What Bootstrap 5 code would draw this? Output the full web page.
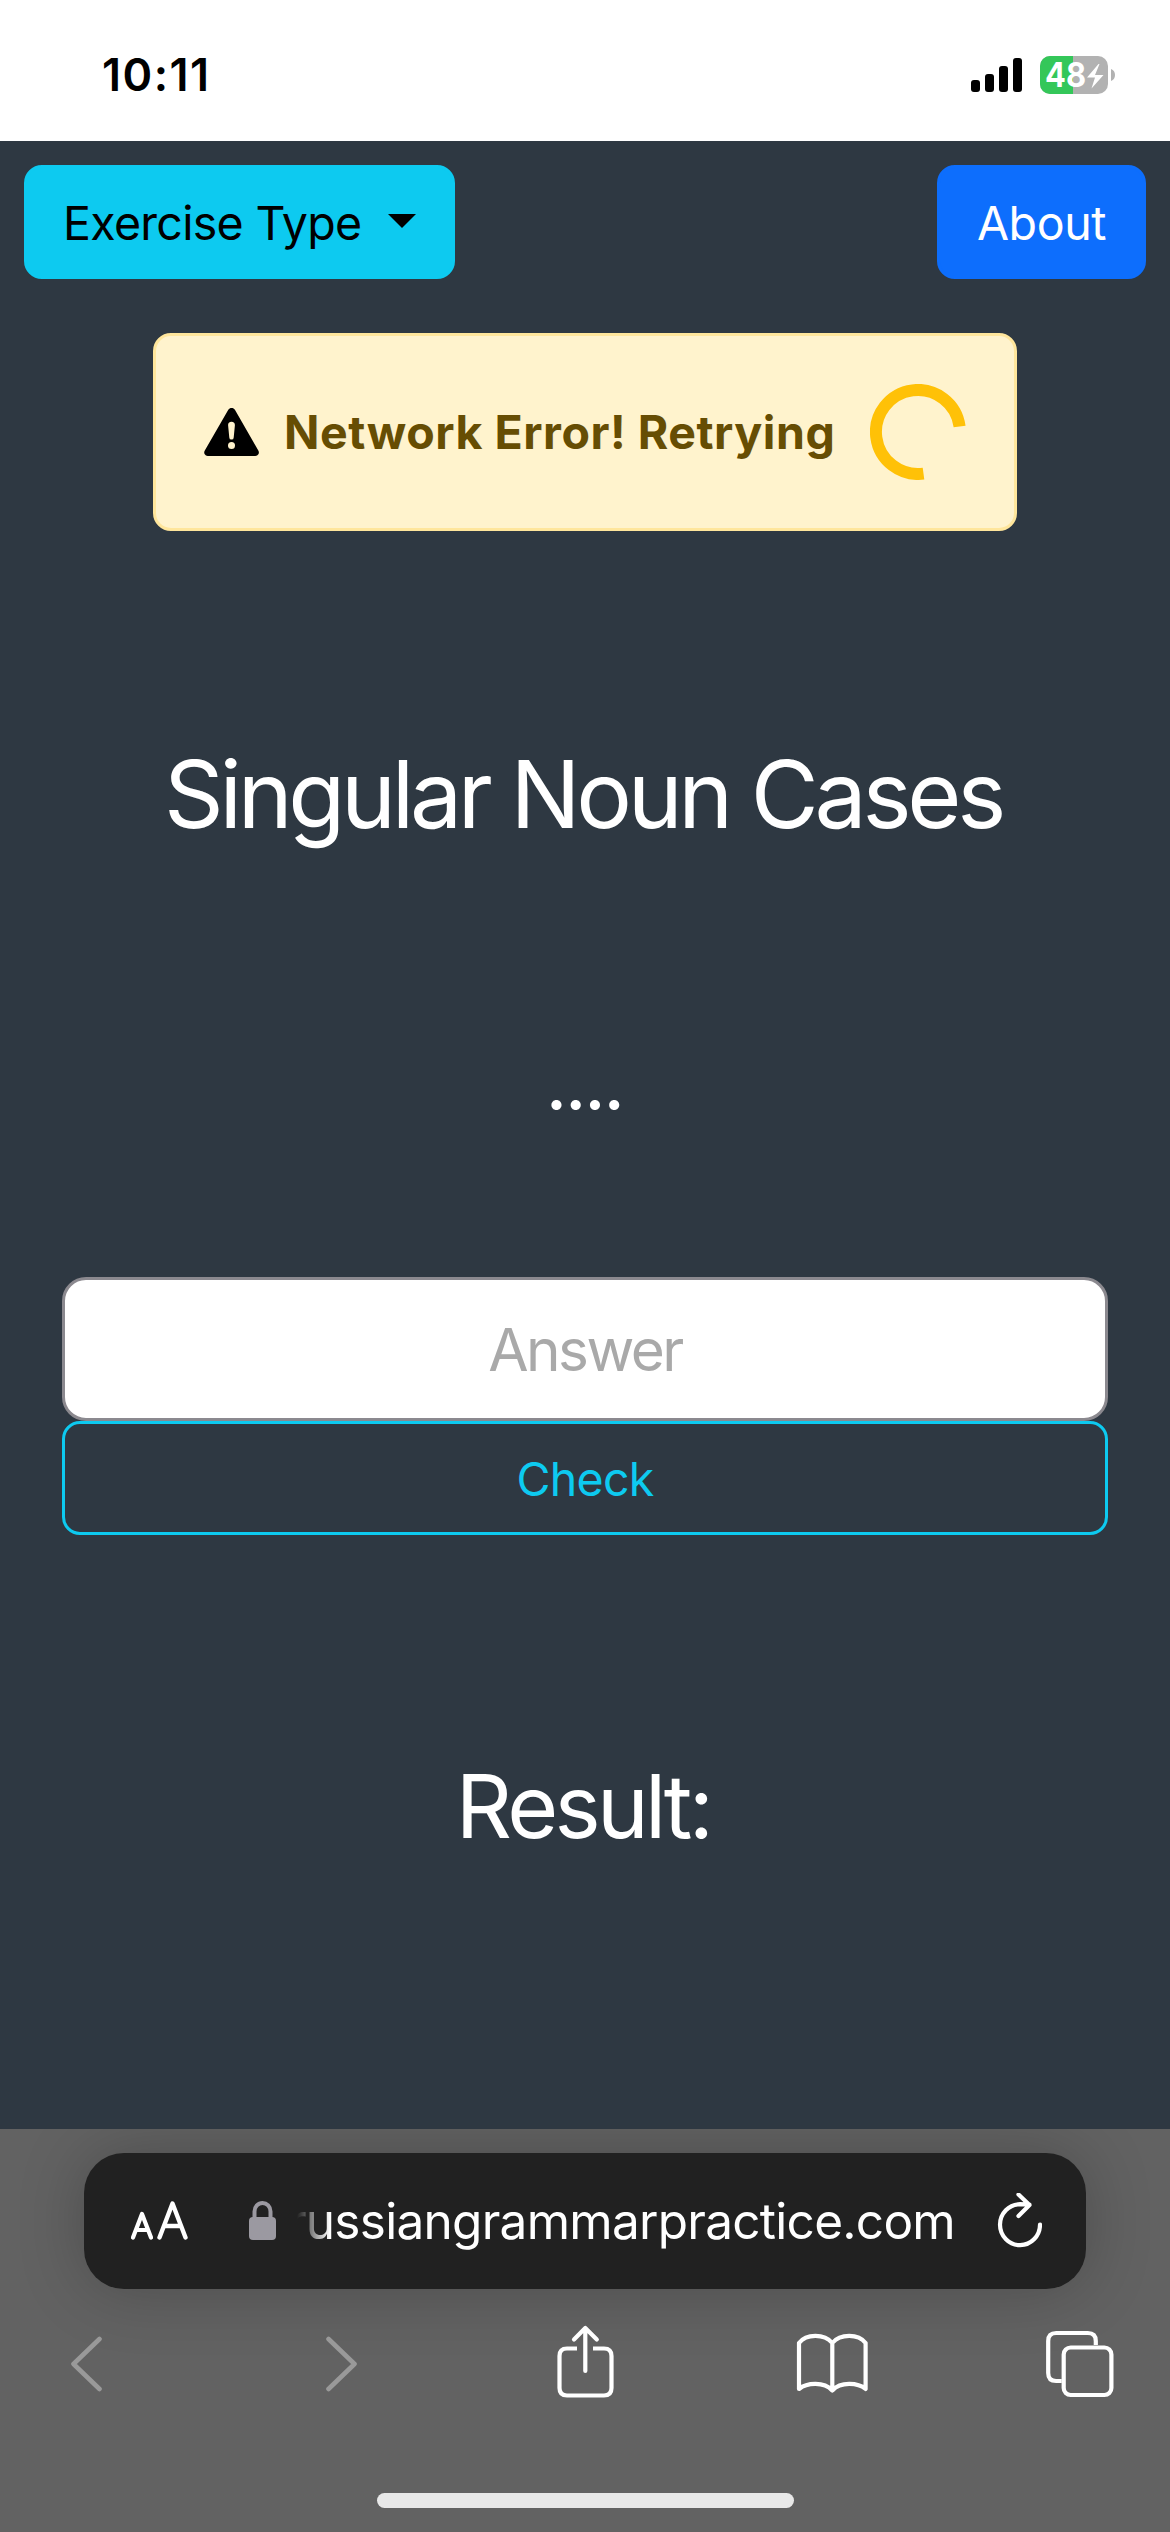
<!DOCTYPE html>
<html lang="en" data-bs-theme="light">
<head>
<meta charset="utf-8">
<meta name="viewport" content="width=device-width, initial-scale=1">
<title>Russian Grammar Practice</title>
<link href="https://cdn.jsdelivr.net/npm/bootstrap@5.3.0/dist/css/bootstrap.min.css" rel="stylesheet">
<style>
  body { font-family: Inter, "Liberation Sans", sans-serif; background: #2e3842; overflow: hidden; }
  .screen { width: 1170px; height: 2532px; }
  svg { display: block; flex: none; }
  .status-bar { height: 141px; padding: 8px 55px 0 102px; }
  .clock { font-size: 45px; font-weight: 600; line-height: 1; letter-spacing: 1.5px; color: #000; }
  .page-body { height: 1988px; }
  .top-nav { padding: 24px 24px 0; }
  .btn-xl { --bs-btn-font-size: 46.5px; --bs-btn-border-radius: 18px; --bs-btn-border-width: 3px; --bs-btn-line-height: 1; height: 114px; padding: 2px 36px 0; white-space: nowrap; letter-spacing: -.7px; }
  .btn-about { width: 209px; letter-spacing: -.4px; }
  .btn-xl.dropdown-toggle::after { margin-left: 27px; margin-top: -9px; border-top: 14.4px solid; border-left: 14.4px solid transparent; border-right: 14.4px solid transparent; letter-spacing: 0; }
  .net-alert { width: 864px; height: 198px; margin-top: 54px; padding: 0 48px; border: 3px solid #ffe69c; border-radius: 18px; background: #fff3cd; color: #664d03; }
  .net-text { font-size: 46.5px; font-weight: 700; line-height: 1; margin-left: 25px; white-space: nowrap; letter-spacing: .54px; }
  .retry-ring { width: 96px; height: 96px; }
  .exercise-title { margin-top: 193px; height: 140px; line-height: 140px; font-size: 93px; font-weight: 400; letter-spacing: -4.3px; text-indent: -4px; color: #fff; white-space: nowrap; }
  .prompt-dots { margin-top: 158px; height: 120px; line-height: 120px; font-size: 76px; letter-spacing: -2.6px; text-indent: -2px; color: #fff; }
  .answer-form { margin-top: 135px; padding: 0 62px; }
  .answer-input { height: 144px; border: 3px solid #8b898f; border-radius: 24px; font-size: 58.5px; letter-spacing: -2.5px; padding: 0; background: #fff; }
  .answer-input::placeholder { color: #a9a9a9; opacity: 1; }
  .result-title { margin-top: 201px; height: 140px; line-height: 140px; font-size: 87.5px; font-weight: 400; letter-spacing: -3.7px; text-indent: -4px; color: #fff; }
  .browser-bar { height: 403px; background: #626262; padding-top: 24px; overflow: hidden; }
  .address-pill { width: 1002px; height: 136px; margin: 0 84px; border-radius: 40px; background: #212121; box-shadow: 0 0 66px rgba(0,0,0,.22); padding: 0 44px 0 46px; color: #fff; }
  .lock { margin-left: 59px; }
  .url-text { width: 658px; margin-left: 21px; overflow: hidden; font-size: 49.5px; line-height: 1.3; letter-spacing: -.72px; white-space: nowrap; -webkit-mask-image: linear-gradient(90deg, transparent 0, #000 5%); mask-image: linear-gradient(90deg, transparent 0, #000 5%); }
  .tool-row { padding: 36px 54px 0 68px; height: 120px; }
  .home-line { width: 417px; height: 15px; border-radius: 8px; background: #e8e8e8; margin: 84px 0 0 377px; }
</style>
<script src="https://cdn.jsdelivr.net/npm/bootstrap@5.3.0/dist/js/bootstrap.bundle.min.js"></script>
</head>
<body>
<div class="screen d-flex flex-column">
  <header class="status-bar bg-white d-flex align-items-center justify-content-between">
    <div class="clock">10:11</div>
    <svg width="144" height="38" viewBox="971 55 144 38">
      <g fill="#000"><rect x="971" y="79" width="9" height="12" rx="3"/><rect x="985" y="73" width="9" height="18" rx="3"/><rect x="999" y="65" width="9" height="26" rx="3"/><rect x="1013" y="57" width="9" height="34" rx="3"/></g>
      <clipPath id="bat"><rect x="1040" y="55" width="68" height="38" rx="10"/></clipPath>
      <g clip-path="url(#bat)"><rect x="1040" y="55" width="68" height="38" fill="#b2b2b2"/><rect x="1040" y="55" width="33" height="38" fill="#34c759"/></g>
      <path d="M1111 68q4 1.500 4 6t-4 6z" fill="#b2b2b2"/>
      <text x="1045" y="86" font-size="33.500" font-weight="700" fill="#fff" textLength="41" lengthAdjust="spacingAndGlyphs" font-family="Inter, sans-serif">48</text>
      <path d="M1098.500 63L1087 76.500h8l-3.500 11L1103.500 74h-8.500l4.500-11z" fill="#fff"/>
    </svg>
  </header>

  <main class="page-body d-flex flex-column">
    <nav class="top-nav d-flex justify-content-between">
      <button class="btn btn-info btn-xl dropdown-toggle" type="button">Exercise Type</button>
      <button class="btn btn-primary btn-xl btn-about" type="button">About</button>
    </nav>

    <div class="net-alert mx-auto d-flex align-items-center" role="alert">
      <svg width="55" height="48" viewBox="0 0 55 48"><path d="M24.300 1.800a3.800 3.800 0 0 1 6.600 0L54.300 42.500a3.600 3.600 0 0 1-3.100 5.500H4a3.600 3.600 0 0 1-3.200-5.500z" fill="#000"/><path d="M27.500 13.700c2.100 0 3.600 1.500 3.400 3.500l-1.200 12.200a2.200 2.200 0 0 1-4.400 0L24.100 17.200c-.2-2 1.300-3.500 3.400-3.500z" fill="#fff3cd"/><circle cx="27.500" cy="37.500" r="3.500" fill="#fff3cd"/></svg>
      <span class="net-text">Network Error! Retrying</span>
      <svg class="retry-ring ms-auto" viewBox="-48 -48 96 96"><path d="M5.500 41.600A42 42 0 1 1 41.600-5.500" fill="none" stroke="#ffc107" stroke-width="12"/></svg>
    </div>

    <h1 class="exercise-title text-center mb-0">Singular Noun Cases</h1>
    <div class="prompt-dots text-center">....</div>

    <form class="answer-form d-flex flex-column">
      <input class="form-control answer-input text-center" type="text" placeholder="Answer">
      <button class="btn btn-outline-info btn-xl w-100" type="button">Check</button>
    </form>

    <h2 class="result-title text-center mb-0">Result:</h2>
  </main>

  <footer class="browser-bar">
    <div class="address-pill d-flex align-items-center">
      <svg width="60" height="40" viewBox="130 2202 60 40" fill="none" stroke="#fff" stroke-linecap="round" stroke-linejoin="round"><path stroke-width="4.200" d="M133 2238.500l9-23.500 9 23.500M136 2231h12"/><path stroke-width="4.400" d="M159.500 2238.500l13-34 13 34M164 2227h17"/></svg>
      <svg class="lock" width="27" height="42" viewBox="249 2200 27 42"><path d="M254.500 2219v-7.500a8 8.500 0 0 1 16 0v7.500" fill="none" stroke="#9b99a1" stroke-width="4"/><rect x="249" y="2217" width="27" height="23" rx="4" fill="#9b99a1"/></svg>
      <div class="url-text d-flex justify-content-end"><span>russiangrammarpractice.com</span></div>
      <svg class="ms-auto" width="46" height="56" viewBox="996 2193 46 56" fill="none" stroke="#fff" stroke-width="4.200" stroke-linecap="round" stroke-linejoin="round"><path d="M1040 2224.500A20 20.500 0 1 1 1020 2204.200l9.500.3M1018.500 2194.500l11 10.500-11 11"/></svg>
    </div>
    <div class="tool-row d-flex align-items-start">
      <svg width="1048" height="76" viewBox="68 2325 1048 76" fill="none" stroke="#fff" stroke-width="4.200" stroke-linecap="round" stroke-linejoin="round">
        <g stroke="#999"><path stroke-width="4.600" d="M99.500 2339L73.500 2364l26 25M328.500 2339l26 25-26 25"/></g>
        <path stroke-linecap="butt" d="M577 2348.500h-10q-7.500 0-7.500 7.500v32q0 7.500 7.500 7.500h37q7.500 0 7.500-7.500v-32q0-7.500-7.500-7.500h-11"/>
        <path d="M585.300 2371V2328.500M574 2339.500l11.300-11.500 11.500 11.500"/>
        <path d="M832.300 2390.500V2343c-8-9.500-26-9.500-33.300 0v46c8-6.500 25-7.500 33.300 1.500 8.300-9 25.500-8 33.300-1.500v-46c-7.300-9.500-25.300-9.500-33.300 0"/>
        <path stroke-linecap="butt" d="M1095.800 2345v-4q0-8-8-8h-31.600q-8 0-8 8v32q0 8 8 8h5.500"/>
        <rect x="1063.700" y="2347.500" width="47.700" height="47.500" rx="7"/>
      </svg>
    </div>
    <div class="home-line"></div>
  </footer>
</div>
</body>
</html>
